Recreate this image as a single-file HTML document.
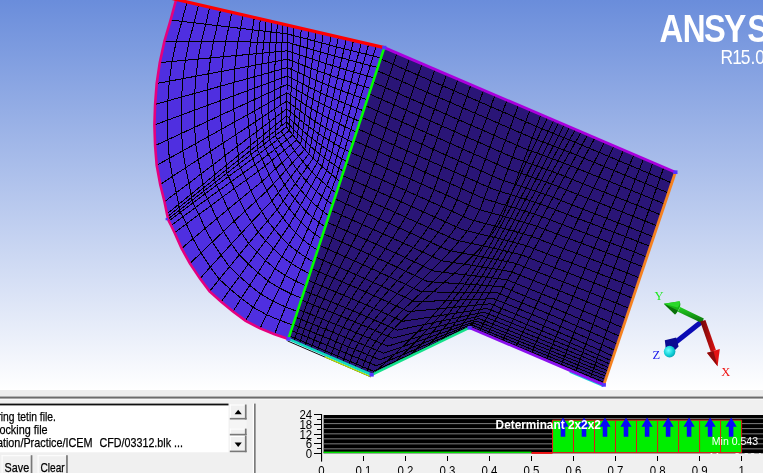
<!DOCTYPE html>
<html><head><meta charset="utf-8"><title>ICEM CFD</title>
<style>html,body{margin:0;padding:0;background:#f0f0f0;overflow:hidden}body{width:763px;height:473px;position:relative;font-family:"Liberation Sans",sans-serif}</style>
</head><body>
<svg width="763" height="473" viewBox="0 0 763 473" style="display:block;position:absolute;left:0;top:0;will-change:transform" font-family="'Liberation Sans', sans-serif">
<defs>
<linearGradient id="bg" x1="0" y1="0" x2="0" y2="1"><stop offset="0" stop-color="#6a8ddb"/><stop offset="1" stop-color="#ffffff"/></linearGradient>
<clipPath id="vp"><rect x="0" y="0" width="763" height="390"/></clipPath>
<linearGradient id="gshaft" x1="0" y1="0" x2="0" y2="1"><stop offset="0" stop-color="#22d322"/><stop offset="1" stop-color="#0a6a0a"/></linearGradient>
<linearGradient id="rshaft" x1="0" y1="0" x2="1" y2="0"><stop offset="0" stop-color="#6a0808"/><stop offset="1" stop-color="#e01010"/></linearGradient>
<radialGradient id="ball" cx="0.4" cy="0.4" r="0.7"><stop offset="0" stop-color="#7ff"/><stop offset="0.6" stop-color="#10d0d8"/><stop offset="1" stop-color="#0898a8"/></radialGradient>
</defs>
<rect x="0" y="0" width="763" height="390" fill="url(#bg)"/>
<g clip-path="url(#vp)">
<path d="M384.3 47.6L675.4 172.2L603.8 384.9L469.6 327.7L371.6 374.8L288.4 338.9Z" fill="#2a1577"/>
<path d="M176.2 -0.5L170.6 20.0L164.4 41.2L159.8 62.6L156.7 83.5L155.1 104.4L154.4 125.0L155.1 145.6L156.7 165.3L160.2 184.5L164.5 201.7L167.0 213.9L167.6 216.6L168.0 219.1L168.8 221.0L171.1 225.5L174.6 232.7L181.6 248.5L190.0 263.6L200.0 278.6L209.6 291.4L221.2 301.8L233.0 311.5L245.7 320.8L260.1 328.4L274.5 334.3L288.4 338.9L384.3 47.6Z" fill="#4f2fe0"/>
<g fill="none" stroke="#000" stroke-width="1" stroke-linejoin="round" shape-rendering="crispEdges">
<path d="M384.3 47.6L397.0 53.0L409.6 58.4L422.0 63.7L435.0 69.3L446.6 74.3L458.0 79.1L471.0 84.7L483.6 90.1L495.0 95.0L507.0 100.1L518.5 105.0L530.0 110.0L541.0 114.7L547.5 117.5L553.8 120.2L559.0 122.4L564.4 124.7L569.7 127.0L575.4 129.4L581.3 131.9L587.7 134.7L595.0 137.8L604.6 141.9L614.0 145.9L623.6 150.0L634.0 154.5L643.7 158.6L653.0 162.6L663.8 167.2L675.4 172.2M380.6 58.9L393.0 64.3L405.2 69.6L417.3 74.8L430.0 80.3L441.3 85.2L452.5 90.0L465.1 95.5L477.4 100.8L488.5 105.7L500.2 110.7L511.4 115.6L522.5 120.4L533.2 125.1L539.6 127.8L546.5 130.6L552.2 132.9L558.1 135.3L563.8 137.6L569.9 140.1L576.1 142.6L582.6 145.4L589.9 148.5L599.7 152.6L609.3 156.7L619.1 160.8L629.7 165.3L639.6 169.4L649.1 173.4L660.1 178.0L671.8 183.0M376.8 70.5L388.8 75.7L400.8 80.9L412.6 86.1L424.9 91.4L436.0 96.2L446.9 100.9L459.3 106.3L471.2 111.5L482.1 116.2L493.5 121.1L504.4 125.9L515.3 130.6L525.7 135.1L532.0 137.8L539.4 140.7L545.6 143.0L552.0 145.4L558.1 147.8L564.6 150.3L571.2 152.9L577.8 155.6L585.1 158.7L595.1 162.8L604.9 166.8L614.9 170.9L625.7 175.4L635.8 179.5L645.6 183.5L656.7 188.1L668.4 193.0M372.9 82.2L384.7 87.3L396.3 92.5L407.7 97.5L419.8 102.7L430.6 107.5L441.3 112.1L453.2 117.4L464.9 122.5L475.4 127.1L486.5 131.9L497.1 136.6L507.7 141.2L517.8 145.7L524.0 148.3L531.9 151.3L538.7 153.7L545.5 156.2L552.0 158.6L559.0 161.2L565.9 163.8L572.7 166.6L580.0 169.6L590.2 173.8L600.1 177.8L610.4 181.9L621.3 186.3L631.6 190.5L641.6 194.5L652.9 199.1L664.7 204.0M369.1 93.8L380.5 98.9L391.8 103.9L403.0 108.8L414.7 114.0L425.2 118.6L435.6 123.2L447.3 128.3L458.6 133.3L468.8 137.9L479.6 142.6L489.9 147.2L500.2 151.8L510.0 156.1L516.1 158.7L524.6 161.7L531.9 164.3L539.2 166.8L546.1 169.3L553.5 172.0L560.7 174.7L567.5 177.4L574.8 180.5L585.3 184.6L595.3 188.6L605.9 192.8L617.0 197.3L627.5 201.5L637.7 205.5L649.1 210.1L661.0 215.0M365.2 105.5L376.3 110.5L387.3 115.4L398.1 120.2L409.5 125.3L419.8 129.8L430.0 134.3L441.3 139.4L452.3 144.3L462.3 148.7L472.7 153.4L482.7 157.8L492.8 162.3L502.2 166.5L508.2 169.1L517.2 172.2L525.0 174.8L532.8 177.5L540.1 180.0L547.9 182.8L555.4 185.5L562.4 188.2L569.7 191.3L580.4 195.4L590.6 199.5L601.3 203.7L612.6 208.2L623.3 212.4L633.8 216.5L645.3 221.1L657.3 226.0M361.4 117.1L372.2 122.0L382.9 126.8L393.4 131.5L404.4 136.5L414.4 140.9L424.4 145.3L435.4 150.3L446.0 155.1L455.7 159.4L465.9 164.0L475.6 168.4L485.4 172.7L494.5 176.9L500.4 179.4L509.9 182.6L518.2 185.3L526.4 188.0L534.1 190.6L542.4 193.4L550.2 196.2L557.3 198.9L564.6 202.0L575.5 206.2L585.8 210.3L596.8 214.5L608.3 219.0L619.2 223.3L629.9 227.4L641.6 232.1L653.6 237.0M357.6 128.8L368.1 133.5L378.4 138.1L388.6 142.7L399.4 147.5L409.2 151.8L419.0 156.1L429.6 160.9L440.0 165.5L449.5 169.8L459.4 174.2L468.9 178.4L478.4 182.7L487.3 186.7L493.1 189.1L503.1 192.3L511.9 195.0L520.6 197.8L528.7 200.3L537.3 203.1L545.5 205.9L552.7 208.6L560.0 211.6L571.0 215.8L581.6 219.9L592.8 224.1L604.5 228.6L615.5 232.9L626.4 237.0L638.3 241.7L650.4 246.5M353.7 140.4L363.9 145.0L374.0 149.5L383.9 153.9L394.4 158.6L403.9 162.8L413.5 167.0L423.8 171.7L433.9 176.2L443.1 180.3L452.7 184.6L462.0 188.8L471.2 192.9L479.8 196.8L485.5 199.2L496.1 202.4L505.4 205.2L514.5 207.9L522.9 210.5L531.9 213.3L540.4 216.0L547.7 218.8L555.1 221.8L566.3 226.0L577.0 230.1L588.5 234.4L600.3 239.0L611.6 243.3L622.7 247.5L634.7 252.2L646.9 257.0M349.9 152.1L359.8 156.5L369.6 160.9L379.2 165.2L389.3 169.8L398.6 173.9L408.0 177.9L418.0 182.5L427.8 186.8L436.8 190.8L446.2 195.0L455.2 199.0L464.2 203.0L472.5 206.8L478.1 209.2L489.2 212.4L499.0 215.1L508.5 217.8L517.3 220.4L526.7 223.1L535.6 225.8L542.9 228.6L550.3 231.5L561.8 235.8L572.6 239.9L584.3 244.3L596.3 248.8L607.8 253.2L619.1 257.4L631.3 262.2L643.5 267.0M346.1 163.7L355.6 168.0L365.1 172.3L374.4 176.5L384.3 180.9L393.3 184.9L402.5 189.0L412.2 193.4L421.7 197.6L430.4 201.6L439.5 205.7L448.2 209.6L456.9 213.5L465.0 217.2L470.5 219.6L482.1 222.7L492.3 225.4L502.3 228.1L511.4 230.6L521.3 233.3L530.4 235.9L537.9 238.7L545.2 241.7L556.9 246.1L567.9 250.2L579.8 254.7L592.0 259.4L603.6 263.9L615.2 268.3L627.5 273.1L639.8 278.0M342.2 175.4L351.5 179.6L360.7 183.7L369.7 187.8L379.2 192.1L388.0 196.0L397.0 199.9L406.4 204.2L415.6 208.4L424.1 212.2L432.9 216.2L441.4 220.0L449.9 223.9L457.6 227.4L463.1 229.8L475.1 232.8L485.8 235.4L496.3 237.9L505.8 240.3L516.0 242.9L525.4 245.4L533.0 248.3L540.4 251.2L552.2 255.7L563.4 260.0L575.5 264.5L587.9 269.3L599.7 273.9L611.5 278.4L624.0 283.3L636.3 288.3M338.4 187.0L347.4 191.1L356.2 195.1L365.0 199.0L374.2 203.2L382.8 207.0L391.6 210.8L400.7 215.0L409.6 219.1L417.9 222.8L426.4 226.7L434.7 230.4L442.9 234.2L450.4 237.6L455.8 240.0L468.3 242.8L479.5 245.2L490.3 247.6L500.2 249.8L510.8 252.2L520.5 254.5L528.3 257.4L535.6 260.4L547.7 265.0L559.0 269.3L571.3 274.0L583.8 278.9L595.9 283.6L607.9 288.3L620.5 293.3L632.9 298.4M334.6 198.7L343.2 202.6L351.8 206.5L360.2 210.3L369.2 214.4L377.5 218.1L386.1 221.9L394.9 225.9L403.6 229.9L411.6 233.5L419.9 237.3L427.9 241.0L435.9 244.7L443.2 248.0L448.5 250.4L461.5 252.9L473.1 255.1L484.4 257.2L494.6 259.2L505.6 261.4L515.6 263.4L523.4 266.4L530.8 269.4L543.1 274.1L554.5 278.5L567.1 283.4L579.8 288.5L592.0 293.3L604.2 298.2L617.0 303.4L629.5 308.6M330.7 210.3L339.1 214.1L347.4 217.8L355.6 221.5L364.3 225.5L372.4 229.1L380.7 232.8L389.3 236.7L397.7 240.5L405.5 244.1L413.6 247.8L421.4 251.4L429.2 255.0L436.2 258.3L441.4 260.7L454.9 262.8L467.0 264.6L478.6 266.4L489.2 268.1L500.6 269.9L510.9 271.6L518.8 274.7L526.2 277.7L538.7 282.6L550.3 287.1L563.1 292.2L575.9 297.4L588.4 302.4L600.8 307.5L613.7 312.8L626.3 318.2M326.9 222.0L335.0 225.7L343.0 229.3L350.9 232.9L359.3 236.7L367.2 240.2L375.3 243.8L383.6 247.7L391.7 251.4L399.4 254.9L407.2 258.5L414.8 262.1L422.3 265.6L429.1 268.9L434.3 271.2L448.2 272.9L460.8 274.3L472.9 275.6L483.8 276.9L495.5 278.3L506.2 279.6L514.2 282.8L521.6 285.7L534.3 290.8L546.0 295.6L559.0 300.8L572.1 306.2L584.7 311.5L597.3 316.8L610.3 322.4L623.0 327.9M323.1 233.6L330.9 237.1L338.6 240.6L346.2 244.0L354.4 247.7L362.1 251.2L370.1 254.7L378.1 258.4L386.0 262.1L393.5 265.5L401.0 269.0L408.4 272.5L415.8 276.0L422.4 279.2L427.5 281.5L441.9 282.6L454.9 283.4L467.4 284.2L478.7 285.0L490.8 285.9L501.7 286.7L509.9 289.9L517.3 292.9L530.2 298.2L542.1 303.0L555.3 308.5L568.5 314.1L581.3 319.5L594.1 325.0L607.4 330.8L620.1 336.5M319.2 245.3L326.8 248.6L334.2 252.0L341.6 255.2L349.5 258.8L357.0 262.1L364.9 265.6L372.7 269.1L380.4 272.7L387.6 276.0L395.0 279.5L402.3 282.8L409.5 286.2L415.9 289.3L421.0 291.7L435.9 292.0L449.3 292.2L462.3 292.4L473.9 292.6L486.4 292.8L497.6 293.0L505.9 296.3L513.3 299.4L526.4 304.7L538.5 309.7L552.0 315.3L565.4 321.0L578.3 326.6L591.4 332.3L604.7 338.2L617.6 344.0M315.4 256.9L322.7 260.1L329.9 263.2L337.0 266.4L344.7 269.8L352.1 273.0L359.8 276.3L367.4 279.8L374.8 283.2L382.0 286.4L389.2 289.8L396.3 293.1L403.3 296.4L409.6 299.4L414.6 301.7L430.1 301.2L444.0 300.6L457.4 300.1L469.3 299.7L482.2 299.1L493.7 298.7L502.1 302.1L509.6 305.1L522.9 310.6L535.2 315.7L548.9 321.5L562.4 327.3L575.6 333.0L588.9 338.8L602.4 344.8L615.3 350.7M311.5 268.6L318.6 271.6L325.6 274.6L332.5 277.5L340.0 280.8L347.1 283.9L354.7 287.1L362.1 290.4L369.4 293.7L376.4 296.8L383.5 300.0L390.4 303.2L397.3 306.4L403.4 309.3L408.5 311.6L424.5 310.2L438.9 308.7L452.7 307.4L465.0 306.2L478.3 304.9L490.1 303.8L498.6 307.2L506.2 310.3L519.7 315.9L532.2 321.0L546.1 326.9L559.9 332.7L573.3 338.5L586.7 344.4L600.4 350.4L613.4 356.3M307.7 280.2L314.5 283.0L321.3 285.8L327.9 288.6L335.2 291.7L342.2 294.7L349.7 297.8L356.9 300.9L364.1 304.0L370.9 307.1L377.9 310.1L384.7 313.2L391.5 316.3L397.5 319.0L402.6 321.3L419.1 318.8L434.1 316.5L448.3 314.3L461.0 312.4L474.7 310.2L486.8 308.4L495.5 311.8L503.1 314.9L516.9 320.5L529.5 325.7L543.7 331.5L557.6 337.4L571.2 343.2L584.9 349.1L598.7 355.1L611.9 360.9M304.2 290.8L310.8 293.5L317.3 296.1L323.8 298.8L330.9 301.7L337.8 304.5L345.2 307.6L352.3 310.6L359.2 313.5L366.0 316.4L372.8 319.4L379.6 322.3L386.3 325.3L392.2 327.9L397.3 330.1L414.4 326.6L429.8 323.4L444.5 320.3L457.5 317.7L471.5 314.7L483.9 312.2L492.7 315.7L500.5 318.7L514.5 324.3L527.3 329.5L541.6 335.4L555.8 341.2L569.6 346.9L583.4 352.7L597.4 358.7L610.7 364.4M301.2 300.0L307.6 302.6L313.9 305.1L320.2 307.7L327.2 310.5L333.9 313.3L341.2 316.3L348.1 319.1L355.0 322.0L361.6 324.8L368.4 327.7L375.0 330.5L381.7 333.4L387.4 335.9L392.5 338.1L410.1 333.7L425.9 329.6L441.0 325.8L454.3 322.4L468.6 318.7L481.3 315.5L490.2 319.0L498.0 322.1L512.2 327.8L525.1 333.0L539.7 338.9L554.0 344.8L568.0 350.5L582.0 356.4L596.1 362.3L609.5 368.0M298.1 309.3L304.3 311.8L310.5 314.2L316.6 316.7L323.4 319.4L330.0 322.1L337.2 325.0L344.0 327.8L350.7 330.6L357.3 333.3L363.9 336.0L370.5 338.8L377.0 341.6L382.7 344.0L387.8 346.1L405.9 340.7L422.1 335.7L437.6 331.0L451.3 326.9L465.9 322.4L478.8 318.5L487.8 322.1L495.7 325.2L510.1 330.9L523.2 336.2L538.0 342.1L552.5 348.0L566.5 353.7L580.7 359.5L595.0 365.4L608.5 371.0M295.5 317.2L301.5 319.6L307.5 322.0L313.5 324.4L320.1 327.1L326.7 329.7L333.8 332.6L340.4 335.3L347.0 338.0L353.5 340.7L360.0 343.4L366.5 346.1L373.0 348.8L378.5 351.1L383.7 353.2L402.1 346.9L418.8 341.1L434.5 335.6L448.5 330.8L463.4 325.6L476.6 321.1L485.7 324.7L493.6 327.9L508.1 333.7L521.4 339.0L536.3 345.0L551.0 350.9L565.2 356.7L579.5 362.5L593.9 368.4L607.5 374.0M293.2 324.4L299.0 326.8L304.9 329.1L310.7 331.5L317.2 334.1L323.6 336.7L330.7 339.6L337.2 342.3L343.6 344.9L350.0 347.5L356.5 350.2L362.9 352.8L369.3 355.4L374.8 357.7L379.9 359.8L398.8 352.5L415.7 346.0L431.8 339.8L446.0 334.3L461.2 328.4L474.5 323.3L483.8 327.0L491.7 330.2L506.4 336.1L519.8 341.5L534.9 347.6L549.6 353.5L564.0 359.3L578.4 365.2L592.9 371.0L606.6 376.6M291.2 330.5L296.9 332.8L302.6 335.2L308.3 337.5L314.6 340.2L321.0 342.8L328.0 345.7L334.3 348.3L340.7 351.0L347.0 353.6L353.4 356.2L359.7 358.8L366.0 361.5L371.4 363.7L376.5 365.8L395.7 357.7L413.0 350.4L429.3 343.5L443.7 337.4L459.1 330.9L472.6 325.2L481.9 329.0L489.9 332.3L504.7 338.3L518.2 343.8L533.4 350.0L548.3 356.1L562.7 362.0L577.3 368.0L591.9 374.0L605.6 379.6M289.4 335.8L295.0 338.2L300.6 340.5L306.2 342.9L312.4 345.5L318.7 348.1L325.6 351.1L331.9 353.7L338.1 356.3L344.4 359.0L350.6 361.6L356.9 364.2L363.1 366.9L368.4 369.1L373.5 371.3L393.0 362.4L410.5 354.3L427.0 346.8L441.6 340.1L457.2 333.0L470.8 326.8L480.2 330.7L488.2 334.0L503.1 340.2L516.7 345.9L532.0 352.3L547.0 358.5L561.5 364.6L576.2 370.7L590.8 376.8L604.6 382.5M288.4 338.9L293.9 341.3L299.4 343.6L304.9 346.0L311.1 348.7L317.3 351.4L324.2 354.3L330.3 357.0L336.5 359.7L342.7 362.3L348.9 365.0L355.1 367.7L361.3 370.3L366.5 372.6L371.6 374.8L391.2 365.4L408.8 356.9L425.5 348.9L440.2 341.8L455.9 334.3L469.6 327.7L479.0 331.7L487.0 335.1L502.0 341.5L515.6 347.3L531.0 353.9L546.0 360.3L560.6 366.5L575.3 372.8L590.0 379.0L603.8 384.9"/>
<path d="M384.3 47.6L381.9 54.9L379.5 62.2L377.1 69.4L374.7 76.7L372.3 84.0L369.9 91.3L367.5 98.6L365.1 105.9L362.8 113.1L360.4 120.4L358.0 127.7L355.6 135.0L353.2 142.3L350.8 149.6L348.4 156.8L346.0 164.1L343.6 171.4L341.2 178.7L338.8 186.0L336.4 193.2L334.0 200.5L331.6 207.8L329.2 215.1L326.8 222.4L324.4 229.7L322.0 236.9L319.6 244.2L317.2 251.5L314.8 258.8L312.4 266.1L310.0 273.4L307.6 280.6L305.2 287.9L302.8 295.2L300.4 302.5L298.0 309.8L295.6 317.1L293.2 324.3L290.8 331.6L288.4 338.9M397.0 53.0L394.6 60.2L392.2 67.4L389.8 74.7L387.4 81.9L385.0 89.1L382.6 96.3L380.2 103.5L377.8 110.7L375.5 117.9L373.1 125.1L370.7 132.3L368.3 139.5L365.9 146.7L363.5 153.9L361.1 161.1L358.7 168.3L356.2 175.5L353.6 182.7L351.0 189.9L348.3 197.2L345.6 204.4L342.9 211.6L340.1 218.8L337.2 226.0L334.4 233.2L331.5 240.4L328.7 247.6L325.8 254.8L323.0 262.0L320.1 269.2L317.3 276.4L314.5 283.6L311.8 290.8L309.1 298.0L306.4 305.2L303.8 312.4L301.2 319.7L298.7 326.9L296.3 334.1L293.9 341.3M409.6 58.4L407.2 65.6L404.8 72.7L402.4 79.8L400.0 87.0L397.6 94.1L395.2 101.2L392.8 108.3L390.4 115.5L388.0 122.6L385.7 129.7L383.3 136.9L380.9 144.0L378.5 151.1L376.1 158.3L373.7 165.4L371.2 172.5L368.7 179.6L365.9 186.8L363.1 193.9L360.2 201.0L357.1 208.2L354.0 215.3L350.8 222.4L347.6 229.6L344.3 236.7L341.0 243.8L337.7 251.0L334.4 258.1L331.1 265.2L327.9 272.3L324.6 279.5L321.5 286.6L318.3 293.7L315.3 300.9L312.4 308.0L309.5 315.1L306.8 322.3L304.2 329.4L301.8 336.5L299.4 343.6M422.0 63.7L419.6 70.8L417.2 77.9L414.8 84.9L412.4 92.0L410.0 99.0L407.6 106.1L405.2 113.1L402.8 120.2L400.4 127.3L398.0 134.3L395.7 141.4L393.3 148.4L390.9 155.5L388.5 162.5L386.1 169.6L383.6 176.7L380.9 183.7L378.1 190.8L375.0 197.8L371.8 204.9L368.5 211.9L365.0 219.0L361.5 226.1L357.8 233.1L354.2 240.2L350.4 247.2L346.7 254.3L342.9 261.3L339.2 268.4L335.5 275.4L331.9 282.5L328.3 289.6L324.9 296.6L321.6 303.7L318.4 310.7L315.3 317.8L312.4 324.8L309.8 331.9L307.3 339.0L304.9 346.0M435.0 69.3L432.6 76.3L430.2 83.3L427.8 90.3L425.4 97.2L423.0 104.2L420.6 111.2L418.2 118.2L415.8 125.2L413.4 132.2L411.0 139.1L408.6 146.1L406.3 153.1L403.9 160.1L401.5 167.1L399.1 174.1L396.6 181.1L393.8 188.0L390.8 195.0L387.5 202.0L384.1 209.0L380.4 216.0L376.6 223.0L372.7 230.0L368.7 236.9L364.6 243.9L360.5 250.9L356.3 257.9L352.1 264.9L347.9 271.9L343.8 278.8L339.8 285.8L335.9 292.8L332.1 299.8L328.5 306.8L325.0 313.8L321.8 320.8L318.7 327.7L316.0 334.7L313.5 341.7L311.1 348.7M446.6 74.3L444.2 81.2L441.8 88.1L439.4 95.0L437.0 102.0L434.6 108.9L432.2 115.8L429.8 122.8L427.4 129.7L425.0 136.6L422.6 143.5L420.2 150.5L417.8 157.4L415.4 164.3L413.0 171.2L410.6 178.2L408.1 185.1L405.2 192.0L402.1 199.0L398.7 205.9L395.0 212.8L391.1 219.7L387.1 226.7L382.9 233.6L378.5 240.5L374.1 247.5L369.6 254.4L365.1 261.3L360.6 268.2L356.1 275.2L351.7 282.1L347.4 289.0L343.2 295.9L339.1 302.9L335.3 309.8L331.6 316.7L328.2 323.7L325.0 330.6L322.2 337.5L319.7 344.4L317.3 351.4M458.0 79.1L455.6 86.0L453.2 92.9L450.8 99.8L448.4 106.7L446.0 113.5L443.5 120.4L441.1 127.3L438.7 134.2L436.3 141.1L433.9 147.9L431.5 154.8L429.1 161.7L426.7 168.6L424.3 175.5L421.9 182.3L419.3 189.2L416.4 196.1L413.2 203.0L409.6 209.9L405.8 216.7L401.7 223.6L397.5 230.5L393.0 237.4L388.4 244.3L383.8 251.1L379.0 258.0L374.2 264.9L369.4 271.8L364.7 278.7L360.0 285.5L355.4 292.4L351.0 299.3L346.7 306.2L342.6 313.1L338.8 319.9L335.2 326.8L332.0 333.7L329.1 340.6L326.6 347.4L324.2 354.3M471.0 84.7L468.6 91.5L466.2 98.3L463.8 105.1L461.4 111.9L459.0 118.7L456.6 125.6L454.1 132.4L451.7 139.2L449.3 146.0L446.9 152.8L444.5 159.6L442.1 166.4L439.7 173.2L437.3 180.0L434.9 186.8L432.3 193.6L429.3 200.4L425.9 207.2L422.2 214.0L418.1 220.9L413.7 227.7L409.1 234.5L404.3 241.3L399.3 248.1L394.2 254.9L389.0 261.7L383.8 268.5L378.6 275.3L373.4 282.1L368.3 288.9L363.3 295.7L358.5 302.5L353.9 309.3L349.5 316.2L345.5 323.0L341.7 329.8L338.3 336.6L335.3 343.4L332.8 350.2L330.3 357.0M483.6 90.1L481.2 96.8L478.8 103.6L476.4 110.3L474.0 117.1L471.6 123.8L469.2 130.5L466.7 137.3L464.3 144.0L461.9 150.8L459.5 157.5L457.1 164.2L454.7 171.0L452.3 177.7L449.9 184.5L447.5 191.2L444.9 197.9L441.8 204.7L438.3 211.4L434.3 218.1L430.0 224.9L425.3 231.6L420.4 238.4L415.3 245.1L409.9 251.8L404.4 258.6L398.8 265.3L393.2 272.1L387.6 278.8L382.0 285.5L376.5 292.3L371.2 299.0L366.0 305.8L361.1 312.5L356.4 319.2L352.1 326.0L348.1 332.7L344.6 339.5L341.5 346.2L338.9 352.9L336.5 359.7M495.0 95.0L492.6 101.7L490.2 108.4L487.8 115.0L485.4 121.7L482.9 128.4L480.5 135.1L478.1 141.8L475.7 148.5L473.3 155.1L470.9 161.8L468.5 168.5L466.1 175.2L463.6 181.9L461.2 188.6L458.8 195.2L456.2 201.9L453.1 208.6L449.4 215.3L445.3 222.0L440.8 228.7L435.9 235.3L430.7 242.0L425.3 248.7L419.6 255.4L413.8 262.1L407.9 268.8L402.0 275.4L396.0 282.1L390.1 288.8L384.3 295.5L378.7 302.2L373.2 308.9L368.1 315.6L363.2 322.2L358.7 328.9L354.5 335.6L350.9 342.3L347.7 349.0L345.1 355.7L342.7 362.3M507.0 100.1L504.6 106.7L502.2 113.4L499.8 120.0L497.3 126.6L494.9 133.2L492.5 139.9L490.1 146.5L487.7 153.1L485.3 159.7L482.9 166.3L480.5 173.0L478.0 179.6L475.6 186.2L473.2 192.8L470.8 199.5L468.2 206.1L465.0 212.7L461.2 219.3L456.9 225.9L452.1 232.6L447.0 239.2L441.5 245.8L435.8 252.4L429.8 259.1L423.6 265.7L417.4 272.3L411.1 278.9L404.7 285.5L398.5 292.2L392.3 298.8L386.4 305.4L380.6 312.0L375.1 318.7L370.0 325.3L365.2 331.9L361.0 338.5L357.2 345.1L353.9 351.8L351.3 358.4L348.9 365.0M518.5 105.0L516.1 111.6L513.7 118.2L511.3 124.7L508.8 131.3L506.4 137.9L504.0 144.4L501.6 151.0L499.2 157.6L496.8 164.1L494.3 170.7L491.9 177.3L489.5 183.8L487.1 190.4L484.7 197.0L482.3 203.5L479.6 210.1L476.3 216.7L472.4 223.2L468.0 229.8L463.0 236.4L457.6 242.9L451.9 249.5L445.9 256.1L439.6 262.6L433.1 269.2L426.5 275.8L419.9 282.3L413.2 288.9L406.6 295.5L400.2 302.0L393.9 308.6L387.9 315.2L382.1 321.7L376.8 328.3L371.8 334.8L367.4 341.4L363.5 348.0L360.2 354.5L357.5 361.1L355.1 367.7M530.0 110.0L527.6 116.5L525.2 123.0L522.7 129.5L520.3 136.0L517.9 142.5L515.5 149.0L513.1 155.5L510.7 162.0L508.2 168.6L505.8 175.1L503.4 181.6L501.0 188.1L498.6 194.6L496.1 201.1L493.7 207.6L491.1 214.1L487.7 220.6L483.7 227.1L479.0 233.6L473.9 240.2L468.3 246.7L462.3 253.2L456.0 259.7L449.4 266.2L442.6 272.7L435.7 279.2L428.7 285.7L421.7 292.2L414.8 298.7L408.0 305.3L401.4 311.8L395.1 318.3L389.1 324.8L383.5 331.3L378.4 337.8L373.8 344.3L369.7 350.8L366.4 357.3L363.7 363.8L361.3 370.3M541.0 114.7L538.6 121.1L536.2 127.6L533.7 134.0L531.3 140.5L528.9 146.9L526.5 153.4L524.1 159.8L521.6 166.3L519.2 172.7L516.8 179.2L514.4 185.6L512.0 192.1L509.6 198.5L507.1 204.9L504.7 211.4L502.0 217.8L498.6 224.3L494.4 230.7L489.6 237.2L484.3 243.6L478.4 250.1L472.1 256.5L465.5 263.0L458.6 269.4L451.4 275.9L444.2 282.3L436.8 288.8L429.5 295.2L422.2 301.7L415.1 308.1L408.1 314.6L401.5 321.0L395.2 327.5L389.4 333.9L384.0 340.4L379.2 346.8L375.1 353.3L371.6 359.7L368.9 366.2L366.5 372.6M547.5 117.5L544.9 123.0L542.2 128.6L539.6 134.2L536.9 139.8L534.3 145.4L531.7 151.0L529.0 156.6L526.4 162.2L523.7 167.8L521.1 173.4L518.4 179.0L515.7 184.6L513.0 190.2L510.2 195.9L507.4 201.5L504.6 207.2L501.7 212.9L498.7 218.7L495.7 224.4L492.6 230.3L489.3 236.1L485.9 242.1L482.4 248.1L478.7 254.2L474.8 260.4L470.8 266.7L466.4 273.1L461.8 279.6L456.9 286.3L451.7 293.1L446.1 300.1L440.0 307.3L433.6 314.8L426.6 322.5L419.1 330.4L411.0 338.6L402.2 347.1L392.8 356.0L382.6 365.2L371.6 374.8M553.8 120.2L551.1 125.6L548.4 131.1L545.8 136.5L543.1 142.0L540.4 147.5L537.7 152.9L535.0 158.4L532.3 163.9L529.6 169.4L526.9 174.8L524.2 180.3L521.5 185.8L518.8 191.3L516.0 196.8L513.2 202.3L510.4 207.9L507.5 213.4L504.5 219.0L501.5 224.6L498.5 230.3L495.3 236.0L492.1 241.7L488.7 247.5L485.2 253.4L481.5 259.3L477.7 265.3L473.7 271.4L469.4 277.6L465.0 284.0L460.3 290.4L455.2 297.0L449.9 303.8L444.2 310.7L438.1 317.8L431.6 325.1L424.6 332.6L417.1 340.4L409.1 348.4L400.5 356.7L391.2 365.4M559.0 122.4L556.3 127.7L553.6 133.1L550.9 138.4L548.2 143.8L545.5 149.1L542.8 154.5L540.1 159.9L537.4 165.2L534.7 170.6L532.0 175.9L529.3 181.3L526.6 186.7L523.8 192.1L521.0 197.4L518.3 202.8L515.4 208.3L512.6 213.7L509.7 219.1L506.8 224.6L503.8 230.1L500.7 235.6L497.6 241.2L494.4 246.8L491.0 252.5L487.6 258.2L484.0 263.9L480.3 269.8L476.4 275.7L472.4 281.7L468.1 287.8L463.6 294.0L458.9 300.4L453.9 306.8L448.6 313.5L442.9 320.2L437.0 327.1L430.6 334.3L423.8 341.6L416.6 349.1L408.8 356.9M564.4 124.7L561.7 129.9L559.0 135.2L556.3 140.4L553.5 145.7L550.8 150.9L548.1 156.1L545.4 161.4L542.7 166.6L539.9 171.9L537.2 177.1L534.5 182.4L531.7 187.6L529.0 192.9L526.2 198.1L523.5 203.4L520.6 208.7L517.8 214.0L515.0 219.3L512.1 224.6L509.2 230.0L506.2 235.3L503.1 240.7L500.1 246.1L496.9 251.6L493.6 257.1L490.3 262.6L486.8 268.2L483.3 273.9L479.6 279.6L475.8 285.4L471.8 291.2L467.6 297.2L463.2 303.2L458.6 309.3L453.8 315.6L448.8 322.0L443.4 328.5L437.8 335.1L431.8 341.9L425.5 348.9M569.7 127.0L567.0 132.1L564.2 137.2L561.5 142.3L558.8 147.5L556.0 152.6L553.3 157.7L550.6 162.9L547.8 168.0L545.1 173.1L542.4 178.3L539.6 183.4L536.9 188.5L534.1 193.7L531.3 198.8L528.6 204.0L525.8 209.1L523.0 214.3L520.1 219.5L517.3 224.6L514.4 229.8L511.5 235.1L508.6 240.3L505.6 245.5L502.5 250.8L499.5 256.1L496.3 261.4L493.1 266.8L489.8 272.2L486.4 277.6L482.9 283.1L479.3 288.7L475.6 294.3L471.8 299.9L467.8 305.7L463.7 311.5L459.4 317.3L454.9 323.3L450.2 329.4L445.3 335.5L440.2 341.8M575.4 129.4L572.6 134.4L569.9 139.4L567.1 144.4L564.4 149.4L561.6 154.5L558.8 159.5L556.1 164.5L553.3 169.5L550.6 174.5L547.8 179.5L545.0 184.5L542.3 189.6L539.5 194.6L536.7 199.6L533.9 204.6L531.1 209.6L528.4 214.7L525.6 219.7L522.7 224.7L519.9 229.8L517.1 234.8L514.2 239.9L511.3 245.0L508.5 250.0L505.5 255.1L502.6 260.2L499.6 265.4L496.6 270.5L493.5 275.6L490.4 280.8L487.3 286.0L484.1 291.2L480.8 296.5L477.5 301.8L474.1 307.1L470.7 312.4L467.1 317.8L463.5 323.3L459.7 328.8L455.9 334.3M581.3 131.9L578.5 136.8L575.7 141.7L572.9 146.6L570.1 151.5L567.3 156.4L564.5 161.3L561.8 166.2L559.0 171.1L556.2 176.0L553.4 180.9L550.6 185.8L547.8 190.7L545.0 195.6L542.2 200.4L539.4 205.3L536.6 210.2L533.8 215.1L531.0 220.0L528.2 224.9L525.5 229.8L522.7 234.7L519.9 239.6L517.1 244.5L514.3 249.4L511.5 254.3L508.7 259.2L505.9 264.1L503.1 269.0L500.3 273.9L497.5 278.8L494.7 283.7L491.9 288.5L489.1 293.4L486.4 298.3L483.6 303.2L480.8 308.1L478.0 313.0L475.2 317.9L472.4 322.8L469.6 327.7M587.7 134.7L585.0 139.6L582.3 144.5L579.5 149.4L576.8 154.4L574.1 159.3L571.4 164.2L568.7 169.1L566.0 174.1L563.2 179.0L560.5 183.9L557.8 188.8L555.1 193.8L552.4 198.7L549.7 203.6L546.9 208.6L544.2 213.5L541.5 218.4L538.8 223.3L536.1 228.3L533.4 233.2L530.6 238.1L527.9 243.0L525.2 248.0L522.5 252.9L519.8 257.8L517.0 262.7L514.3 267.7L511.6 272.6L508.9 277.5L506.2 282.4L503.5 287.4L500.7 292.3L498.0 297.2L495.3 302.1L492.6 307.1L489.9 312.0L487.2 316.9L484.4 321.9L481.7 326.8L479.0 331.7M595.0 137.8L592.3 142.7L589.6 147.7L586.9 152.6L584.2 157.5L581.5 162.5L578.8 167.4L576.1 172.3L573.4 177.3L570.7 182.2L568.0 187.1L565.3 192.1L562.6 197.0L559.9 201.9L557.2 206.9L554.5 211.8L551.8 216.7L549.1 221.7L546.4 226.6L543.7 231.5L541.0 236.5L538.3 241.4L535.6 246.3L532.9 251.3L530.2 256.2L527.5 261.1L524.8 266.1L522.1 271.0L519.4 275.9L516.7 280.9L514.0 285.8L511.3 290.7L508.6 295.7L505.9 300.6L503.2 305.5L500.5 310.5L497.8 315.4L495.1 320.3L492.4 325.2L489.7 330.2L487.0 335.1M604.6 141.9L602.0 146.9L599.5 151.9L596.9 156.9L594.3 161.9L591.8 166.8L589.2 171.8L586.6 176.8L584.1 181.8L581.5 186.8L579.0 191.8L576.4 196.8L573.8 201.8L571.3 206.8L568.7 211.8L566.1 216.8L563.6 221.7L561.0 226.7L558.4 231.7L555.9 236.7L553.3 241.7L550.7 246.7L548.2 251.7L545.6 256.7L543.0 261.7L540.5 266.7L537.9 271.6L535.3 276.6L532.8 281.6L530.2 286.6L527.6 291.6L525.1 296.6L522.5 301.6L520.0 306.6L517.4 311.6L514.8 316.6L512.3 321.5L509.7 326.5L507.1 331.5L504.6 336.5L502.0 341.5M614.0 145.9L611.5 151.0L609.1 156.0L606.6 161.0L604.2 166.1L601.7 171.1L599.2 176.1L596.8 181.2L594.3 186.2L591.9 191.2L589.4 196.3L586.9 201.3L584.5 206.3L582.0 211.4L579.6 216.4L577.1 221.4L574.6 226.5L572.2 231.5L569.7 236.5L567.3 241.6L564.8 246.6L562.3 251.6L559.9 256.7L557.4 261.7L555.0 266.8L552.5 271.8L550.0 276.8L547.6 281.9L545.1 286.9L542.7 291.9L540.2 297.0L537.7 302.0L535.3 307.0L532.8 312.1L530.4 317.1L527.9 322.1L525.4 327.2L523.0 332.2L520.5 337.2L518.1 342.3L515.6 347.3M623.6 150.0L621.3 155.1L619.0 160.2L616.7 165.3L614.3 170.4L612.0 175.5L609.7 180.6L607.4 185.7L605.1 190.8L602.8 195.9L600.5 201.0L598.1 206.1L595.8 211.2L593.5 216.3L591.2 221.4L588.9 226.5L586.6 231.6L584.2 236.7L581.9 241.8L579.6 246.9L577.3 251.9L575.0 257.0L572.7 262.1L570.4 267.2L568.0 272.3L565.7 277.4L563.4 282.5L561.1 287.6L558.8 292.7L556.5 297.8L554.1 302.9L551.8 308.0L549.5 313.1L547.2 318.2L544.9 323.3L542.6 328.4L540.3 333.5L537.9 338.6L535.6 343.7L533.3 348.8L531.0 353.9M634.0 154.5L631.8 159.6L629.6 164.8L627.4 169.9L625.2 175.1L623.0 180.2L620.8 185.3L618.6 190.5L616.4 195.6L614.2 200.8L612.0 205.9L609.8 211.1L607.6 216.2L605.4 221.4L603.2 226.5L601.0 231.6L598.8 236.8L596.6 241.9L594.4 247.1L592.2 252.2L590.0 257.4L587.8 262.5L585.6 267.7L583.4 272.8L581.2 278.0L579.0 283.1L576.8 288.2L574.6 293.4L572.4 298.5L570.2 303.7L568.0 308.8L565.8 314.0L563.6 319.1L561.4 324.3L559.2 329.4L557.0 334.5L554.8 339.7L552.6 344.8L550.4 350.0L548.2 355.1L546.0 360.3M643.7 158.6L641.6 163.8L639.5 169.0L637.5 174.2L635.4 179.4L633.3 184.6L631.2 189.8L629.2 195.0L627.1 200.2L625.0 205.4L622.9 210.6L620.8 215.8L618.8 221.0L616.7 226.2L614.6 231.4L612.5 236.6L610.5 241.8L608.4 247.0L606.3 252.2L604.2 257.4L602.2 262.6L600.1 267.8L598.0 273.0L595.9 278.1L593.8 283.3L591.8 288.5L589.7 293.7L587.6 298.9L585.5 304.1L583.5 309.3L581.4 314.5L579.3 319.7L577.2 324.9L575.1 330.1L573.1 335.3L571.0 340.5L568.9 345.7L566.8 350.9L564.8 356.1L562.7 361.3L560.6 366.5M653.0 162.6L651.1 167.9L649.1 173.1L647.2 178.4L645.2 183.6L643.3 188.9L641.3 194.1L639.4 199.4L637.5 204.6L635.5 209.9L633.6 215.1L631.6 220.4L629.7 225.7L627.7 230.9L625.8 236.2L623.9 241.4L621.9 246.7L620.0 251.9L618.0 257.2L616.1 262.4L614.1 267.7L612.2 272.9L610.3 278.2L608.3 283.4L606.4 288.7L604.4 293.9L602.5 299.2L600.6 304.5L598.6 309.7L596.7 315.0L594.7 320.2L592.8 325.5L590.8 330.7L588.9 336.0L587.0 341.2L585.0 346.5L583.1 351.7L581.1 357.0L579.2 362.2L577.2 367.5L575.3 372.8M663.8 167.2L662.0 172.5L660.1 177.8L658.3 183.1L656.4 188.4L654.6 193.7L652.7 199.0L650.9 204.3L649.0 209.6L647.2 214.9L645.3 220.2L643.5 225.5L641.7 230.8L639.8 236.1L638.0 241.4L636.1 246.7L634.3 251.9L632.4 257.2L630.6 262.5L628.7 267.8L626.9 273.1L625.1 278.4L623.2 283.7L621.4 289.0L619.5 294.3L617.7 299.6L615.8 304.9L614.0 310.2L612.1 315.5L610.3 320.8L608.5 326.1L606.6 331.4L604.8 336.7L602.9 342.0L601.1 347.3L599.2 352.5L597.4 357.8L595.5 363.1L593.7 368.4L591.8 373.7L590.0 379.0M675.4 172.2L673.6 177.5L671.8 182.8L670.0 188.2L668.2 193.5L666.4 198.8L664.7 204.1L662.9 209.4L661.1 214.7L659.3 220.1L657.5 225.4L655.7 230.7L653.9 236.0L652.1 241.3L650.3 246.6L648.5 252.0L646.8 257.3L645.0 262.6L643.2 267.9L641.4 273.2L639.6 278.6L637.8 283.9L636.0 289.2L634.2 294.5L632.4 299.8L630.6 305.1L628.9 310.5L627.1 315.8L625.3 321.1L623.5 326.4L621.7 331.7L619.9 337.0L618.1 342.4L616.3 347.7L614.5 353.0L612.8 358.3L611.0 363.6L609.2 368.9L607.4 374.3L605.6 379.6L603.8 384.9"/>
<path d="M288.0 25.3L287.9 34.0L287.7 42.4L287.6 50.8L287.5 59.2L287.4 67.6L287.3 76.0L287.1 84.4L287.0 92.8L286.9 101.0L286.8 108.8L286.7 115.8L286.6 121.8L286.5 126.8M293.7 26.7L293.3 35.5L293.0 44.0L292.7 52.5L292.3 61.1L291.9 69.7L291.6 78.3L291.2 86.8L290.9 95.4L290.5 103.8L290.2 111.7L289.9 118.9L289.6 125.1L289.3 130.5M301.3 28.4L300.6 37.4L300.0 46.0L299.3 54.7L298.7 63.5L298.0 72.3L297.3 81.2L296.6 89.9L295.9 98.7L295.2 107.3L294.6 115.4L294.0 122.8L293.4 129.3L292.9 135.0M308.8 30.1L307.8 39.3L307.0 48.0L306.0 57.0L305.0 66.0L304.0 75.1L303.0 84.1L302.1 93.1L301.1 102.1L300.1 110.9L299.3 119.2L298.4 126.8L297.6 133.7L296.7 139.9M316.0 31.8L314.8 41.1L313.7 50.0L312.5 59.2L311.2 68.4L310.0 77.7L308.7 87.1L307.5 96.2L306.2 105.4L305.0 114.5L303.9 122.9L302.8 130.8L301.7 138.0L300.6 144.6M323.3 33.5L321.8 43.0L320.5 52.0L319.0 61.3L317.5 70.7L316.0 80.4L314.5 89.9L313.0 99.3L311.5 108.7L310.0 118.0L308.7 126.6L307.4 134.7L306.0 142.2L304.7 149.3M331.2 35.3L329.4 45.0L327.8 54.0L326.1 63.6L324.3 73.2L322.4 83.0L320.6 92.8L318.8 102.4L317.0 111.9L315.2 121.5L313.7 130.2L312.1 138.5L310.5 146.3L308.8 153.8M338.4 37.0L336.4 46.8L334.6 56.0L332.6 65.7L330.6 75.4L328.5 85.5L326.4 95.5L324.4 105.3L322.4 115.0L320.4 124.8L318.6 133.7L316.8 142.1L315.0 150.3L313.1 158.2M346.3 38.8L344.1 48.7L342.0 58.0L339.7 67.8L337.5 77.8L335.1 88.1L332.7 98.3L330.4 108.2L328.1 118.1L325.8 128.0L323.8 137.0L321.7 145.7L319.7 154.1L317.5 162.4M353.5 40.5L351.1 50.5L348.8 59.9L346.3 69.9L343.9 80.0L341.2 90.5L338.7 100.9L336.2 111.0L333.7 121.0L331.2 131.1L328.9 140.3L326.7 149.2L324.4 157.9L322.1 166.5M361.5 42.3L358.8 52.5L356.3 61.9L353.6 72.0L350.8 82.3L347.9 93.0L345.1 103.5L342.3 113.7L339.6 124.0L336.8 134.2L334.3 143.5L331.9 152.5L329.4 161.5L326.7 170.6M368.7 44.0L365.8 54.3L363.2 63.7L360.2 74.0L357.3 84.4L354.2 95.3L351.1 106.0L348.2 116.4L345.2 126.8L342.3 137.2L339.6 146.6L337.0 155.8L334.3 165.0L331.5 174.5M376.3 45.8L373.2 56.1L370.3 65.6L367.1 76.0L364.0 86.5L360.6 97.6L357.3 108.4L354.1 119.0L350.9 129.5L347.7 140.0L344.8 149.5L341.9 158.8L339.0 168.3L336.0 178.1M384.3 47.6L380.9 58.0L377.7 67.5L374.3 78.0L370.8 88.6L367.1 99.8L363.5 110.8L360.0 121.4L356.5 132.0L353.0 142.7L349.9 152.2L346.7 161.7L343.5 171.4L340.2 181.5M288.0 25.3L293.7 26.7L301.3 28.4L308.8 30.1L316.0 31.8L323.3 33.5L331.2 35.3L338.4 37.0L346.3 38.8L353.5 40.5L361.5 42.3L368.7 44.0L376.3 45.8L384.3 47.6M287.9 34.0L293.3 35.5L300.6 37.4L307.8 39.3L314.8 41.1L321.8 43.0L329.4 45.0L336.4 46.8L344.1 48.7L351.1 50.5L358.8 52.5L365.8 54.3L373.2 56.1L380.9 58.0M287.7 42.4L293.0 44.0L300.0 46.0L307.0 48.0L313.7 50.0L320.5 52.0L327.8 54.0L334.6 56.0L342.0 58.0L348.8 59.9L356.3 61.9L363.2 63.7L370.3 65.6L377.7 67.5M287.6 50.8L292.7 52.5L299.3 54.7L306.0 57.0L312.5 59.2L319.0 61.3L326.1 63.6L332.6 65.7L339.7 67.8L346.3 69.9L353.6 72.0L360.2 74.0L367.1 76.0L374.3 78.0M287.5 59.2L292.3 61.1L298.7 63.5L305.0 66.0L311.2 68.4L317.5 70.7L324.3 73.2L330.6 75.4L337.5 77.8L343.9 80.0L350.8 82.3L357.3 84.4L364.0 86.5L370.8 88.6M287.4 67.6L291.9 69.7L298.0 72.3L304.0 75.1L310.0 77.7L316.0 80.4L322.4 83.0L328.5 85.5L335.1 88.1L341.2 90.5L347.9 93.0L354.2 95.3L360.6 97.6L367.1 99.8M287.3 76.0L291.6 78.3L297.3 81.2L303.0 84.1L308.7 87.1L314.5 89.9L320.6 92.8L326.4 95.5L332.7 98.3L338.7 100.9L345.1 103.5L351.1 106.0L357.3 108.4L363.5 110.8M287.1 84.4L291.2 86.8L296.6 89.9L302.1 93.1L307.5 96.2L313.0 99.3L318.8 102.4L324.4 105.3L330.4 108.2L336.2 111.0L342.3 113.7L348.2 116.4L354.1 119.0L360.0 121.4M287.0 92.8L290.9 95.4L295.9 98.7L301.1 102.1L306.2 105.4L311.5 108.7L317.0 111.9L322.4 115.0L328.1 118.1L333.7 121.0L339.6 124.0L345.2 126.8L350.9 129.5L356.5 132.0M286.9 101.0L290.5 103.8L295.2 107.3L300.1 110.9L305.0 114.5L310.0 118.0L315.2 121.5L320.4 124.8L325.8 128.0L331.2 131.1L336.8 134.2L342.3 137.2L347.7 140.0L353.0 142.7M286.8 108.8L290.2 111.7L294.6 115.4L299.3 119.2L303.9 122.9L308.7 126.6L313.7 130.2L318.6 133.7L323.8 137.0L328.9 140.3L334.3 143.5L339.6 146.6L344.8 149.5L349.9 152.2M286.7 115.8L289.9 118.9L294.0 122.8L298.4 126.8L302.8 130.8L307.4 134.7L312.1 138.5L316.8 142.1L321.7 145.7L326.7 149.2L331.9 152.5L337.0 155.8L341.9 158.8L346.7 161.7M286.6 121.8L289.6 125.1L293.4 129.3L297.6 133.7L301.7 138.0L306.0 142.2L310.5 146.3L315.0 150.3L319.7 154.1L324.4 157.9L329.4 161.5L334.3 165.0L339.0 168.3L343.5 171.4M286.5 126.8L289.3 130.5L292.9 135.0L296.7 139.9L300.6 144.6L304.7 149.3L308.8 153.8L313.1 158.2L317.5 162.4L322.1 166.5L326.7 170.6L331.5 174.5L336.0 178.1L340.2 181.5"/>
<path d="M176.2 -0.5L170.6 20.0L164.4 41.2L159.8 62.6L156.7 83.5L155.1 104.4L154.4 125.0L155.1 145.6L156.7 165.3L160.2 184.5L164.5 201.7L167.0 213.9L167.5 216.6L168.0 219.1M187.0 2.0L181.9 21.4L176.3 41.3L172.1 61.5L169.3 81.2L167.9 100.8L167.2 120.3L167.9 139.7L169.3 158.3L172.4 176.4L176.3 192.7L178.6 204.4L179.0 207.4L179.4 210.2M198.6 4.7L194.1 22.8L189.1 41.4L185.4 60.2L182.9 78.6L181.6 97.0L181.0 115.2L181.6 133.3L182.8 150.8L185.6 167.8L189.0 183.1L191.0 194.2L191.4 197.6L191.7 200.6M209.7 7.2L205.7 24.2L201.4 41.6L198.1 59.1L195.9 76.2L194.7 93.4L194.2 110.3L194.7 127.3L195.7 143.6L198.2 159.5L201.1 173.9L202.9 184.5L203.2 188.2L203.5 191.4M220.6 9.8L217.2 25.6L213.4 41.7L210.6 57.9L208.6 73.8L207.6 89.8L207.2 105.5L207.5 121.3L208.4 136.5L210.5 151.3L213.1 164.8L214.5 174.9L214.8 179.0L215.1 182.4M231.7 12.3L228.8 26.9L225.6 41.8L223.3 56.7L221.6 71.4L220.8 86.1L220.4 100.7L220.6 115.2L221.4 129.3L223.1 143.0L225.2 155.6L226.4 165.2L226.6 169.5L226.8 173.3M242.9 14.9L240.6 28.4L238.0 41.9L236.1 55.6L234.7 69.0L234.0 82.4L233.7 95.8L233.9 109.1L234.4 122.0L235.8 134.7L237.4 146.3L238.4 155.4L238.6 160.0L238.7 164.0M254.3 17.6L252.5 29.8L250.6 42.0L249.1 54.4L248.1 66.5L247.5 78.7L247.2 90.8L247.3 102.8L247.7 114.7L248.7 126.2L249.9 136.8L250.6 145.4L250.7 150.4L250.8 154.6M260.4 19.0L258.9 30.5L257.3 42.1L256.1 53.7L255.2 65.2L254.7 76.7L254.5 88.1L254.5 99.5L254.8 110.7L255.6 121.6L256.6 131.7L257.1 140.0L257.2 145.2L257.2 149.6M266.2 20.3L265.0 31.3L263.7 42.2L262.7 53.1L262.0 63.9L261.6 74.8L261.3 85.6L261.4 96.3L261.6 106.9L262.2 117.3L262.9 126.9L263.3 134.9L263.4 140.3L263.4 144.8M271.9 21.6L271.0 32.0L270.0 42.2L269.2 52.5L268.7 62.7L268.3 72.9L268.1 83.1L268.1 93.2L268.2 103.2L268.6 113.0L269.2 122.2L269.4 129.9L269.4 135.5L269.4 140.1M277.4 22.9L276.8 32.7L276.1 42.3L275.5 51.9L275.1 61.5L274.8 71.1L274.7 80.6L274.6 90.2L274.6 99.7L274.9 108.9L275.2 117.6L275.3 125.1L275.3 130.8L275.3 135.6M282.8 24.1L282.4 33.3L282.0 42.3L281.7 51.3L281.4 60.3L281.2 69.3L281.1 78.3L281.0 87.2L280.9 96.2L281.0 104.9L281.1 113.1L281.1 120.4L281.0 126.2L281.0 131.1M288.0 25.3L287.9 34.0L287.7 42.4L287.6 50.8L287.5 59.2L287.4 67.6L287.3 76.0L287.1 84.4L287.0 92.8L286.9 101.0L286.8 108.8L286.7 115.8L286.6 121.8L286.5 126.8M176.2 -0.5L187.0 2.0L198.6 4.7L209.7 7.2L220.6 9.8L231.7 12.3L242.9 14.9L254.3 17.6L260.4 19.0L266.2 20.3L271.9 21.6L277.4 22.9L282.8 24.1L288.0 25.3M170.6 20.0L181.9 21.4L194.1 22.8L205.7 24.2L217.2 25.6L228.8 26.9L240.6 28.4L252.5 29.8L258.9 30.5L265.0 31.3L271.0 32.0L276.8 32.7L282.4 33.3L287.9 34.0M164.4 41.2L176.3 41.3L189.1 41.4L201.4 41.6L213.4 41.7L225.6 41.8L238.0 41.9L250.6 42.0L257.3 42.1L263.7 42.2L270.0 42.2L276.1 42.3L282.0 42.3L287.7 42.4M159.8 62.6L172.1 61.5L185.4 60.2L198.1 59.1L210.6 57.9L223.3 56.7L236.1 55.6L249.1 54.4L256.1 53.7L262.7 53.1L269.2 52.5L275.5 51.9L281.7 51.3L287.6 50.8M156.7 83.5L169.3 81.2L182.9 78.6L195.9 76.2L208.6 73.8L221.6 71.4L234.7 69.0L248.1 66.5L255.2 65.2L262.0 63.9L268.7 62.7L275.1 61.5L281.4 60.3L287.5 59.2M155.1 104.4L167.9 100.8L181.6 97.0L194.7 93.4L207.6 89.8L220.8 86.1L234.0 82.4L247.5 78.7L254.7 76.7L261.6 74.8L268.3 72.9L274.8 71.1L281.2 69.3L287.4 67.6M154.4 125.0L167.2 120.3L181.0 115.2L194.2 110.3L207.2 105.5L220.4 100.7L233.7 95.8L247.2 90.8L254.5 88.1L261.3 85.6L268.1 83.1L274.7 80.6L281.1 78.3L287.3 76.0M155.1 145.6L167.9 139.7L181.6 133.3L194.7 127.3L207.5 121.3L220.6 115.2L233.9 109.1L247.3 102.8L254.5 99.5L261.4 96.3L268.1 93.2L274.6 90.2L281.0 87.2L287.1 84.4M156.7 165.3L169.3 158.3L182.8 150.8L195.7 143.6L208.4 136.5L221.4 129.3L234.4 122.0L247.7 114.7L254.8 110.7L261.6 106.9L268.2 103.2L274.6 99.7L280.9 96.2L287.0 92.8M160.2 184.5L172.4 176.4L185.6 167.8L198.2 159.5L210.5 151.3L223.1 143.0L235.8 134.7L248.7 126.2L255.6 121.6L262.2 117.3L268.6 113.0L274.9 108.9L281.0 104.9L286.9 101.0M164.5 201.7L176.3 192.7L189.0 183.1L201.1 173.9L213.1 164.8L225.2 155.6L237.4 146.3L249.9 136.8L256.6 131.7L262.9 126.9L269.2 122.2L275.2 117.6L281.1 113.1L286.8 108.8M167.0 213.9L178.6 204.4L191.0 194.2L202.9 184.5L214.5 174.9L226.4 165.2L238.4 155.4L250.6 145.4L257.1 140.0L263.3 134.9L269.4 129.9L275.3 125.1L281.1 120.4L286.7 115.8M167.5 216.6L179.0 207.4L191.4 197.6L203.2 188.2L214.8 179.0L226.6 169.5L238.6 160.0L250.7 150.4L257.2 145.2L263.4 140.3L269.4 135.5L275.3 130.8L281.0 126.2L286.6 121.8M168.0 219.1L179.4 210.2L191.7 200.6L203.5 191.4L215.1 182.4L226.8 173.3L238.7 164.0L250.8 154.6L257.2 149.6L263.4 144.8L269.4 140.1L275.3 135.6L281.0 131.1L286.5 126.8"/>
<path d="M168.0 219.1L179.4 210.2L191.7 200.6L203.5 191.4L215.1 182.4L226.8 173.3L238.7 164.0L250.8 154.6L257.2 149.6L263.4 144.8L269.4 140.1L275.3 135.6L281.0 131.1L286.5 126.8M168.8 221.0L180.4 212.3L192.9 202.9L204.9 194.0L216.6 185.3L228.5 176.5L240.5 167.7L252.6 158.7L259.3 153.7L265.5 148.9L271.7 144.1L277.7 139.5L283.6 134.9L289.3 130.5M171.1 225.5L182.8 216.8L195.4 207.6L207.4 198.8L219.2 190.3L231.1 181.7L243.1 173.1L255.3 164.4L262.0 159.3L268.4 154.3L274.8 149.4L280.9 144.6L287.0 139.8L292.9 135.0M174.6 232.7L186.3 223.9L198.9 214.5L210.9 205.7L222.6 197.0L234.4 188.4L246.3 179.9L258.3 171.3L265.2 165.9L271.7 160.6L278.1 155.3L284.4 150.2L290.6 145.0L296.7 139.9M181.6 248.5L193.0 238.7L205.1 228.5L216.7 218.8L228.0 209.3L239.4 199.9L250.8 190.6L262.3 181.3L269.1 174.9L275.6 168.7L282.0 162.7L288.3 156.7L294.5 150.7L300.6 144.6M190.0 263.6L200.9 252.9L212.4 241.9L223.5 231.4L234.2 221.2L245.0 211.1L255.9 201.1L266.8 191.0L273.5 183.8L279.9 176.8L286.2 169.9L292.4 163.0L298.6 156.2L304.7 149.3M200.0 278.6L210.3 267.1L221.1 255.3L231.4 243.9L241.5 233.0L251.6 222.2L261.7 211.5L271.9 200.8L278.4 192.7L284.7 184.8L290.8 177.0L296.8 169.3L302.9 161.6L308.8 153.8M209.6 291.4L219.3 279.2L229.5 266.8L239.2 254.9L248.6 243.4L258.1 232.1L267.5 221.0L277.0 209.8L283.3 200.9L289.4 192.2L295.4 183.7L301.3 175.3L307.2 166.8L313.1 158.2M221.2 301.8L230.2 289.1L239.5 276.4L248.4 264.0L257.1 252.2L265.7 240.7L274.3 229.2L282.9 217.8L288.9 208.3L294.8 198.9L300.5 189.9L306.2 180.8L311.9 171.7L317.5 162.4M233.0 311.5L241.2 298.4L249.7 285.3L257.9 272.7L265.7 260.6L273.5 248.8L281.3 237.1L289.0 225.5L294.8 215.4L300.4 205.4L305.8 195.8L311.2 186.2L316.6 176.5L322.1 166.5M245.7 320.8L253.1 307.3L260.7 294.0L268.0 281.0L275.0 268.6L281.9 256.6L288.8 244.7L295.6 232.9L301.0 222.3L306.2 211.8L311.4 201.6L316.4 191.4L321.6 181.1L326.7 170.6M260.1 328.4L266.6 314.7L273.1 301.2L279.4 288.0L285.4 275.5L291.3 263.4L297.2 251.5L303.0 239.7L307.9 228.6L312.7 217.6L317.4 206.9L322.0 196.3L326.7 185.5L331.5 174.5M274.5 334.3L280.0 320.4L285.5 306.9L290.8 293.7L295.8 281.2L300.7 269.1L305.6 257.2L310.4 245.4L314.8 234.0L319.1 222.6L323.3 211.6L327.4 200.7L331.7 189.5L336.0 178.1M288.4 338.9L293.0 325.0L297.4 311.5L301.8 298.3L305.9 285.8L309.8 273.8L313.7 262.0L317.6 250.3L321.4 238.6L325.2 227.0L328.9 215.8L332.6 204.6L336.4 193.2L340.2 181.5M168.0 219.1L168.8 221.0L171.1 225.5L174.6 232.7L181.6 248.5L190.0 263.6L200.0 278.6L209.6 291.4L221.2 301.8L233.0 311.5L245.7 320.8L260.1 328.4L274.5 334.3L288.4 338.9M179.4 210.2L180.4 212.3L182.8 216.8L186.3 223.9L193.0 238.7L200.9 252.9L210.3 267.1L219.3 279.2L230.2 289.1L241.2 298.4L253.1 307.3L266.6 314.7L280.0 320.4L293.0 325.0M191.7 200.6L192.9 202.9L195.4 207.6L198.9 214.5L205.1 228.5L212.4 241.9L221.1 255.3L229.5 266.8L239.5 276.4L249.7 285.3L260.7 294.0L273.1 301.2L285.5 306.9L297.4 311.5M203.5 191.4L204.9 194.0L207.4 198.8L210.9 205.7L216.7 218.8L223.5 231.4L231.4 243.9L239.2 254.9L248.4 264.0L257.9 272.7L268.0 281.0L279.4 288.0L290.8 293.7L301.8 298.3M215.1 182.4L216.6 185.3L219.2 190.3L222.6 197.0L228.0 209.3L234.2 221.2L241.5 233.0L248.6 243.4L257.1 252.2L265.7 260.6L275.0 268.6L285.4 275.5L295.8 281.2L305.9 285.8M226.8 173.3L228.5 176.5L231.1 181.7L234.4 188.4L239.4 199.9L245.0 211.1L251.6 222.2L258.1 232.1L265.7 240.7L273.5 248.8L281.9 256.6L291.3 263.4L300.7 269.1L309.8 273.8M238.7 164.0L240.5 167.7L243.1 173.1L246.3 179.9L250.8 190.6L255.9 201.1L261.7 211.5L267.5 221.0L274.3 229.2L281.3 237.1L288.8 244.7L297.2 251.5L305.6 257.2L313.7 262.0M250.8 154.6L252.6 158.7L255.3 164.4L258.3 171.3L262.3 181.3L266.8 191.0L271.9 200.8L277.0 209.8L282.9 217.8L289.0 225.5L295.6 232.9L303.0 239.7L310.4 245.4L317.6 250.3M257.2 149.6L259.3 153.7L262.0 159.3L265.2 165.9L269.1 174.9L273.5 183.8L278.4 192.7L283.3 200.9L288.9 208.3L294.8 215.4L301.0 222.3L307.9 228.6L314.8 234.0L321.4 238.6M263.4 144.8L265.5 148.9L268.4 154.3L271.7 160.6L275.6 168.7L279.9 176.8L284.7 184.8L289.4 192.2L294.8 198.9L300.4 205.4L306.2 211.8L312.7 217.6L319.1 222.6L325.2 227.0M269.4 140.1L271.7 144.1L274.8 149.4L278.1 155.3L282.0 162.7L286.2 169.9L290.8 177.0L295.4 183.7L300.5 189.9L305.8 195.8L311.4 201.6L317.4 206.9L323.3 211.6L328.9 215.8M275.3 135.6L277.7 139.5L280.9 144.6L284.4 150.2L288.3 156.7L292.4 163.0L296.8 169.3L301.3 175.3L306.2 180.8L311.2 186.2L316.4 191.4L322.0 196.3L327.4 200.7L332.6 204.6M281.0 131.1L283.6 134.9L287.0 139.8L290.6 145.0L294.5 150.7L298.6 156.2L302.9 161.6L307.2 166.8L311.9 171.7L316.6 176.5L321.6 181.1L326.7 185.5L331.7 189.5L336.4 193.2M286.5 126.8L289.3 130.5L292.9 135.0L296.7 139.9L300.6 144.6L304.7 149.3L308.8 153.8L313.1 158.2L317.5 162.4L322.1 166.5L326.7 170.6L331.5 174.5L336.0 178.1L340.2 181.5"/>
</g>
<path d="M287.5 340.9L370.7 376.8" stroke="#101010" stroke-width="1.0" fill="none"/>
<path d="M325.0 356.9L370.8 376.6" stroke="#b8e000" stroke-width="1.2" fill="none"/>
<path d="M288.4 338.9L371.6 374.8" stroke="#10d8c0" stroke-width="2.6" fill="none"/>
<path d="M371.6 374.8L469.6 327.7" stroke="#14e08a" stroke-width="2.6" fill="none"/>
<path d="M569.6 372.1L603.2 386.4" stroke="#10d8d8" stroke-width="1.2" fill="none"/>
<path d="M469.6 327.7L603.8 384.9" stroke="#8a10ee" stroke-width="2.8" fill="none"/>
<path d="M675.4 172.2L603.8 384.9" stroke="#f58220" stroke-width="2.8" fill="none"/>
<path d="M384.3 47.6L675.4 172.2" stroke="#aa00dd" stroke-width="2.8" fill="none"/>
<path d="M176.2 -0.5L170.6 20.0L164.4 41.2L159.8 62.6L156.7 83.5L155.1 104.4L154.4 125.0L155.1 145.6L156.7 165.3L160.2 184.5L164.5 201.7L167.0 213.9L167.6 216.6L168.0 219.1L168.8 221.0L171.1 225.5L174.6 232.7L181.6 248.5L190.0 263.6L200.0 278.6L209.6 291.4L221.2 301.8L233.0 311.5L245.7 320.8L260.1 328.4L274.5 334.3L288.4 338.9" stroke="#e6007e" stroke-width="2.6" fill="none"/>
<path d="M172.0 -1.5L384.3 47.6" stroke="#ff0000" stroke-width="3.2" fill="none"/>
<path d="M384.3 47.6L288.4 338.9" stroke="#00ff00" stroke-width="2.6" fill="none"/>
<rect x="382.2" y="45.8" width="4.2" height="3.6" fill="#5533ff"/>
<rect x="673.3" y="170.4" width="4.2" height="3.6" fill="#5533ff"/>
<rect x="601.7" y="383.1" width="4.2" height="3.6" fill="#5533ff"/>
<rect x="467.5" y="325.9" width="4.2" height="3.6" fill="#5533ff"/>
<rect x="369.5" y="373.0" width="4.2" height="3.6" fill="#5533ff"/>
<rect x="286.3" y="337.1" width="4.2" height="3.6" fill="#5533ff"/>
<rect x="165.6" y="217.9" width="2.4" height="2.4" fill="#5533ff"/>
</g>
<g fill="#fff">
<text transform="translate(659.5,42.3) scale(0.860,1)" font-size="38.2" font-weight="bold">A</text>
<text transform="translate(682.7,42.3) scale(0.827,1)" font-size="38.2" font-weight="bold">N</text>
<text transform="translate(704.0,42.3) scale(0.855,1)" font-size="38.2" font-weight="bold">S</text>
<text transform="translate(724.0,42.3) scale(0.876,1)" font-size="38.2" font-weight="bold">Y</text>
<text transform="translate(747.3,42.3) scale(0.855,1)" font-size="38.2" font-weight="bold">S</text>
<text transform="translate(720.5,63.5) scale(0.88,1)" font-size="19.8">R</text>
<text transform="translate(732.3,63.5) scale(0.88,1)" font-size="19.8">1</text>
<text transform="translate(740.8,63.5) scale(0.88,1)" font-size="19.8">5</text>
<text transform="translate(750.6,63.5) scale(0.88,1)" font-size="19.8">.</text>
<text transform="translate(755.2,63.5) scale(0.88,1)" font-size="19.8">0</text>
</g>
<path d="M701.2 318.7L671.9 342.0L675.1 346.0L704.4 322.7Z" fill="#0a0ab4"/><path d="M671.9 342.0L670.6 346.3L675.1 346.0Z" fill="#0a0ab4"/>
<path d="M664.8 340.2L676.2 337.4L678.6 346.6L673.5 351.5L666.0 350.5Z" fill="#0b0b92"/>
<circle cx="669.6" cy="351.6" r="5.8" fill="url(#ball)"/>
<path d="M703.9 318.4L680.1 307.1L677.9 311.7L701.7 323.0Z" fill="url(#gshaft)"/><path d="M680.1 307.1L679.0 309.4L677.9 311.7Z" fill="none"/>
<path d="M663.8 303.8L679.6 301.2Q682.6 306.5 675.0 314.6Z" fill="#16b416"/>
<path d="M663.8 303.8L679.6 301.2Q680.4 304.0 677.6 307.6Z" fill="#2ad82a"/>
<path d="M663.8 303.8L677.8 310.6Q677.0 312.8 675.0 314.6Z" fill="#0a6e0a"/>
<path d="M700.2 321.5L710.8 351.8L716.0 350.2L705.4 319.9Z" fill="url(#rshaft)"/><path d="M707.0 353.1L717.6 366.2L719.8 348.9Z" fill="#e41212"/>
<path d="M713.4 351.0L717.6 366.2L707.0 352.8Z" fill="#8a0c0c"/>
<g font-family="'Liberation Serif', serif" font-size="12.5">
<text x="654.4" y="299.6" fill="#1ee81e">Y</text>
<text x="652.6" y="359.2" fill="#1414ea">Z</text>
<text x="721.2" y="376.4" fill="#ee1414">X</text>
</g>
<rect x="0" y="390" width="763" height="83" fill="#f0f0f0"/>
<rect x="0" y="390" width="763" height="6" fill="#eeeeee"/>
<rect x="0" y="396" width="763" height="1" fill="#b4b4b4"/>
<rect x="0" y="397" width="763" height="1" fill="#6c6c6c"/>
<rect x="0" y="398" width="763" height="1" fill="#a8a8a8"/>
<rect x="0" y="399" width="763" height="1" fill="#f8f8f8"/>
<rect x="0" y="405" width="228.5" height="47.3" fill="#ffffff"/>
<rect x="0" y="403.6" width="228.5" height="1.8" fill="#101010"/>
<g fill="#000" font-size="13.2" stroke="#000" stroke-width="0.25">
<text x="-2.6" y="421.2" textLength="58.4" lengthAdjust="spacingAndGlyphs">ring tetin file.</text>
<text x="-0.6" y="433.9" textLength="48.2" lengthAdjust="spacingAndGlyphs">ocking file</text>
<text x="-3.1" y="446.9" textLength="95.7" lengthAdjust="spacingAndGlyphs">ation/Practice/ICEM</text>
<text x="99.5" y="446.9" textLength="83.5" lengthAdjust="spacingAndGlyphs">CFD/03312.blk ...</text>
</g>
<rect x="229.8" y="404.5" width="16.8" height="47.8" fill="#f5f5f5"/>
<rect x="229.8" y="404.5" width="16.8" height="15.0" fill="#f0f0f0"/><rect x="229.8" y="404.5" width="16.8" height="1" fill="#fff"/><rect x="229.8" y="404.5" width="1" height="15.0" fill="#fff"/><rect x="229.8" y="417.9" width="16.8" height="1.6" fill="#787878"/><rect x="244.9" y="404.5" width="1.7" height="15.0" fill="#787878"/>
<path d="M234.6 414.2L238.2 409.8L241.8 414.2Z" fill="#000"/>
<rect x="229.8" y="428.6" width="16.8" height="6.8" fill="#f0f0f0"/><rect x="229.8" y="428.6" width="16.8" height="1" fill="#fff"/><rect x="229.8" y="428.6" width="1" height="6.8" fill="#fff"/><rect x="229.8" y="433.8" width="16.8" height="1.6" fill="#787878"/><rect x="244.9" y="428.6" width="1.7" height="6.8" fill="#787878"/>
<rect x="229.8" y="436.0" width="16.8" height="16.2" fill="#f0f0f0"/><rect x="229.8" y="436.0" width="16.8" height="1" fill="#fff"/><rect x="229.8" y="436.0" width="1" height="16.2" fill="#fff"/><rect x="229.8" y="450.6" width="16.8" height="1.6" fill="#787878"/><rect x="244.9" y="436.0" width="1.7" height="16.2" fill="#787878"/>
<path d="M234.6 442.6L241.8 442.6L238.2 447.0Z" fill="#000"/>
<rect x="252.8" y="403.6" width="1.2" height="70" fill="#fff"/>
<rect x="254.0" y="403.6" width="1.7" height="70" fill="#7c7c7c"/>
<rect x="1.6" y="455.2" width="30.8" height="20.0" fill="#f0f0f0"/><rect x="1.6" y="455.2" width="30.8" height="1" fill="#fff"/><rect x="1.6" y="455.2" width="1" height="20.0" fill="#fff"/><rect x="1.6" y="473.6" width="30.8" height="1.6" fill="#787878"/><rect x="30.7" y="455.2" width="1.7" height="20.0" fill="#787878"/>
<rect x="37.6" y="455.2" width="30.2" height="20.0" fill="#f0f0f0"/><rect x="37.6" y="455.2" width="30.2" height="1" fill="#fff"/><rect x="37.6" y="455.2" width="1" height="20.0" fill="#fff"/><rect x="37.6" y="473.6" width="30.2" height="1.6" fill="#787878"/><rect x="66.1" y="455.2" width="1.7" height="20.0" fill="#787878"/>
<g fill="#000" font-size="13.2" stroke="#000" stroke-width="0.25">
<text x="4.6" y="471.9" textLength="24.6" lengthAdjust="spacingAndGlyphs">Save</text>
<text x="40.5" y="471.9" textLength="24.2" lengthAdjust="spacingAndGlyphs">Clear</text>
</g>
<rect x="323.6" y="415" width="440" height="38.3" fill="#000"/>
<rect x="323.6" y="418.2" width="440" height="0.9" fill="#8c8c8c"/>
<rect x="323.6" y="423.2" width="440" height="0.9" fill="#8c8c8c"/>
<rect x="323.6" y="428.2" width="440" height="0.9" fill="#8c8c8c"/>
<rect x="323.6" y="433.4" width="440" height="0.9" fill="#8c8c8c"/>
<rect x="323.6" y="438.4" width="440" height="0.9" fill="#8c8c8c"/>
<rect x="323.6" y="443.4" width="440" height="0.9" fill="#8c8c8c"/>
<rect x="323.6" y="448.4" width="440" height="0.9" fill="#8c8c8c"/>
<rect x="323.6" y="451.6" width="207.9" height="1.5" fill="#00e000"/>
<rect x="531.5" y="452.0" width="21.0" height="1.9" fill="#ee1010"/>
<rect x="552.5" y="420.2" width="189.1" height="32.6" fill="#00ee00"/>
<path d="M552.5 420.2V452.8M573.5 420.2V452.8M594.5 420.2V452.8M615.5 420.2V452.8M636.5 420.2V452.8M657.6 420.2V452.8M678.6 420.2V452.8M699.6 420.2V452.8M720.6 420.2V452.8M741.6 420.2V452.8M552.5 420.2H741.6M552.5 452.6H741.6" stroke="#e01818" stroke-width="1" fill="none"/>
<path d="M563.0 417.6L568.6 426.8H565.3V436.8H560.7V426.8H557.4Z" fill="#0808f8"/>
<path d="M584.0 417.6L589.6 426.8H586.3V436.8H581.7V426.8H578.4Z" fill="#0808f8"/>
<path d="M605.0 417.6L610.6 426.8H607.3V436.8H602.7V426.8H599.4Z" fill="#0808f8"/>
<path d="M626.0 417.6L631.6 426.8H628.3V436.8H623.7V426.8H620.4Z" fill="#0808f8"/>
<path d="M647.1 417.6L652.7 426.8H649.4V436.8H644.8V426.8H641.5Z" fill="#0808f8"/>
<path d="M668.1 417.6L673.7 426.8H670.4V436.8H665.8V426.8H662.5Z" fill="#0808f8"/>
<path d="M689.1 417.6L694.7 426.8H691.4V436.8H686.8V426.8H683.5Z" fill="#0808f8"/>
<path d="M710.1 417.6L715.7 426.8H712.4V436.8H707.8V426.8H704.5Z" fill="#0808f8"/>
<path d="M731.1 417.6L736.7 426.8H733.4V436.8H728.8V426.8H725.5Z" fill="#0808f8"/>
<rect x="321" y="414" width="1.1" height="47.6" fill="#000"/>
<path d="M313.6 414.5H321.4M317.4 419.4H321.4M313.6 424.2H321.4M317.4 429.1H321.4M313.6 434.0H321.4M317.4 438.9H321.4M313.6 443.7H321.4M317.4 448.6H321.4M313.6 453.5H321.4" stroke="#000" stroke-width="1" fill="none" shape-rendering="crispEdges"/>
<g fill="#000" font-size="12.3" text-anchor="end">
<text transform="translate(312.1,418.7) scale(0.93,1)">24</text>
<text transform="translate(312.1,428.9) scale(0.93,1)">18</text>
<text transform="translate(312.1,438.9) scale(0.93,1)">12</text>
<text transform="translate(312.1,448.4) scale(0.93,1)">6</text>
<text transform="translate(312.1,458.1) scale(0.93,1)">0</text>
</g>
<path d="M363.4 455.6V461.3M405.4 455.6V461.3M447.5 455.6V461.3M489.5 455.6V461.3M531.5 455.6V461.3M573.5 455.6V461.3M615.5 455.6V461.3M657.6 455.6V461.3M699.6 455.6V461.3M741.6 455.6V461.3" stroke="#000" stroke-width="1" fill="none" shape-rendering="crispEdges"/>
<g fill="#000" font-size="12.3" text-anchor="middle">
<text transform="translate(321.4,474.8) scale(0.93,1)">0</text>
<text transform="translate(363.4,474.8) scale(0.93,1)">0.1</text>
<text transform="translate(405.4,474.8) scale(0.93,1)">0.2</text>
<text transform="translate(447.5,474.8) scale(0.93,1)">0.3</text>
<text transform="translate(489.5,474.8) scale(0.93,1)">0.4</text>
<text transform="translate(531.5,474.8) scale(0.93,1)">0.5</text>
<text transform="translate(573.5,474.8) scale(0.93,1)">0.6</text>
<text transform="translate(615.5,474.8) scale(0.93,1)">0.7</text>
<text transform="translate(657.6,474.8) scale(0.93,1)">0.8</text>
<text transform="translate(699.6,474.8) scale(0.93,1)">0.9</text>
<text transform="translate(741.6,474.8) scale(0.93,1)">1</text>
</g>
<text x="495.6" y="428.6" fill="#fff" font-size="11.9" font-weight="bold" textLength="105.2" lengthAdjust="spacingAndGlyphs">Determinant 2x2x2</text>
<text x="711.8" y="444.6" fill="#fff" font-size="11.2" textLength="46.3" lengthAdjust="spacingAndGlyphs">Min 0.543</text>
<clipPath id="cpm"><rect x="700" y="440" width="63" height="14.0"/></clipPath>
<text x="709.8" y="460.9" fill="#fff" font-size="11.2" clip-path="url(#cpm)">Max 0.994</text>
</svg>
</body></html>
